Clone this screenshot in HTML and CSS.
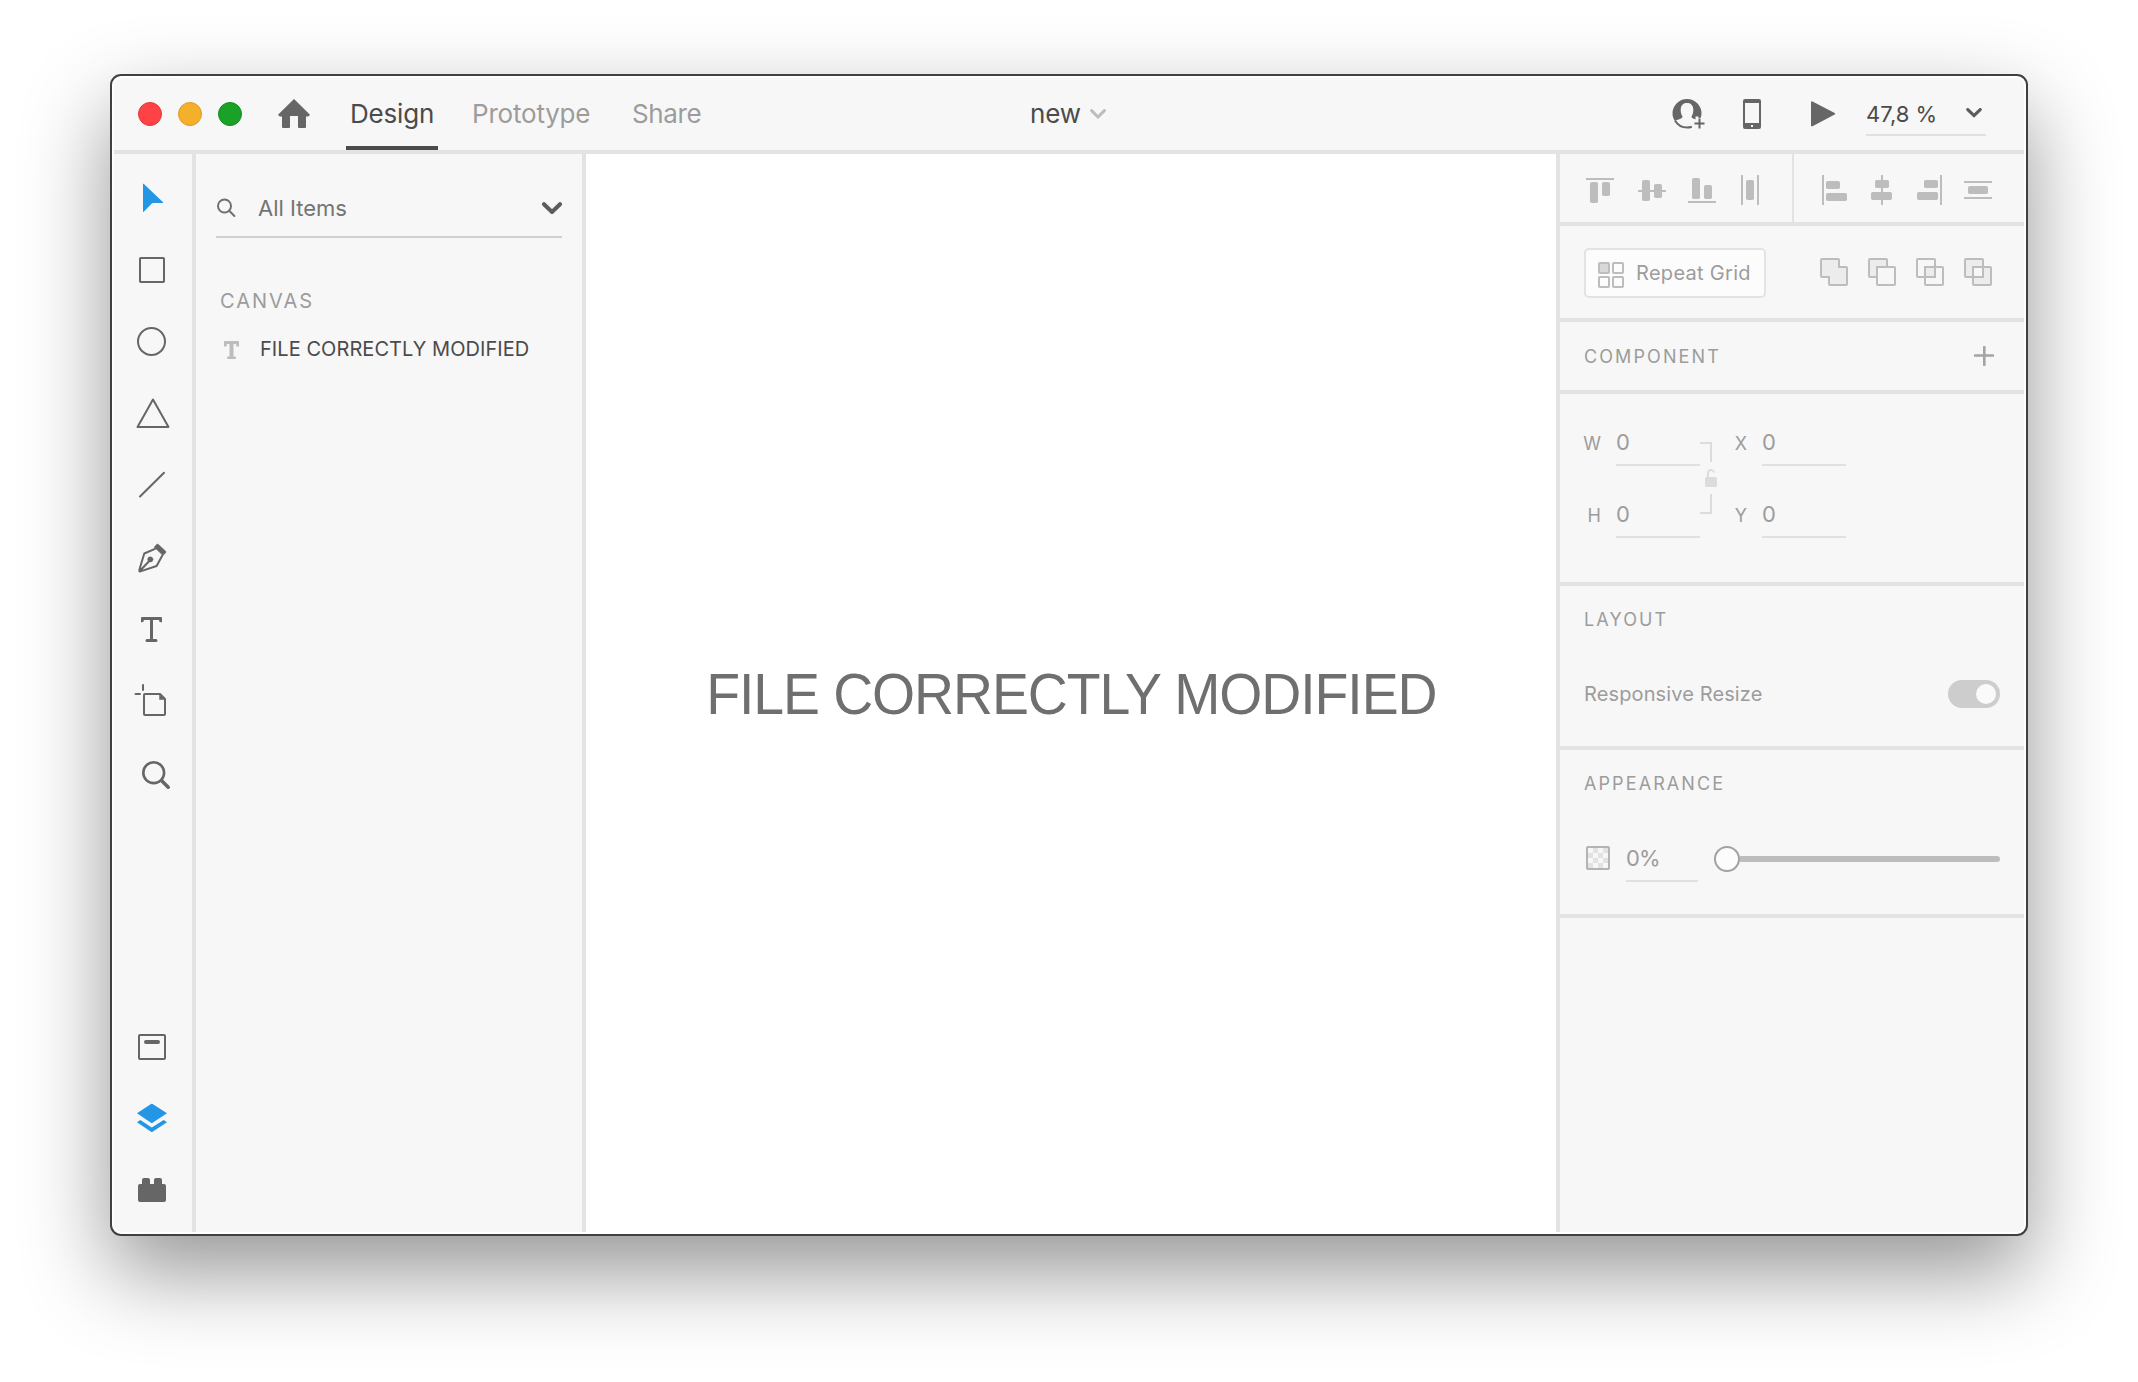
FILE: index.html
```
<!DOCTYPE html>
<html lang="en">
<head>
<meta charset="utf-8">
<title>new</title>
<link rel="stylesheet" href="styles.css">
</head>
<body>
<div class="window">
  <header class="titlebar">
    <div class="titlebar-left">
      <div class="lights"><i class="light red"></i><i class="light amber"></i><i class="light green"></i></div>
      <svg class="home" width="32" height="30" viewBox="0 0 32 30"><path d="M16 0 31.5 15.2a1 1 0 0 1 0 1.3L30 17.6h-2V28a1 1 0 0 1-1 1h-6a1 1 0 0 1-1-1V17h-8v11a1 1 0 0 1-1 1H5a1 1 0 0 1-1-1V17.600H2L.5 16.500a1 1 0 0 1 0-1.300Z"/></svg>
      <nav class="tabs">
        <a class="tab active">Design</a>
        <a class="tab prototype">Prototype</a>
        <a class="tab share">Share</a>
      </nav>
    </div>
    <div class="doc"><span>new</span><svg width="16" height="10" viewBox="0 0 16 10"><path d="M1.600 1.600 8 8l6.400-6.400"/></svg></div>
    <div class="titlebar-right">
      <svg class="user" width="34" height="32" viewBox="0 0 34 32"><path d="M15 1A14.500 14.500 0 0 0 .5 15.500c0 3 .8 5.200 2.500 7.300 2.300-1 5.200-1.500 6.800-2.700.7-.6.800-1.500.3-2.300C8.800 15.500 8.500 13 8.800 10.500 9.200 7 11.500 5 15 5s5.800 2 6.200 5.500c.3 2.500 0 5-1.300 7.300-.5.8-.4 1.700.3 2.300.6.5 2 .9 3.300 1.300v-2.900h3v1.500h2c.7-1.400 1-2.800 1-4.500A14.500 14.500 0 0 0 15 1Z"/><path class="ring" d="M3 22.500C5.500 26.800 10 29.600 15 29.600c1.700 0 3.300-.3 4.800-.9M27.500 20.500v10M22.500 25.500h10"/></svg>
      <svg class="phone" width="18" height="30" viewBox="0 0 18 30"><path fill-rule="evenodd" d="M2 0h14a2 2 0 0 1 2 2v26a2 2 0 0 1-2 2H2a2 2 0 0 1-2-2V2a2 2 0 0 1 2-2Zm0 4v20h14V4Zm6 22v2h2v-2Z"/></svg>
      <svg class="play" width="25" height="26" viewBox="0 0 25 26"><path d="M0 1.200C0 .3.900.2 1.500.5l22.200 11.600c.6.300.6 1 0 1.300L1.500 25.200c-.6.300-1.500.2-1.500-.7Z"/></svg>
      <div class="zoom"><span>47,8 %</span><svg width="16" height="10" viewBox="0 0 16 10"><path d="M1.800 1.600 8 7.600l6.200-6"/></svg></div>
    </div>
  </header>

  <main class="body">
    <aside class="tools">
      <svg class="tool on" viewBox="0 0 78 72"><path d="M29 22.300c0-.6.500-.6.900-.2L48.800 40.100c.5.500.3 1-.3 1H40c-1.300 0-2 .2-2.900 1.100L30 49.600c-.5.500-1 .3-1-.3Z"/></svg>
      <svg class="tool line" viewBox="0 0 78 72"><rect x="26" y="24" width="24" height="24" rx=".8"/></svg>
      <svg class="tool line" viewBox="0 0 78 72"><circle cx="37.500" cy="35.500" r="13.500"/></svg>
      <svg class="tool line" viewBox="0 0 78 72"><path d="M39 21.500 54.500 49h-31Z"/></svg>
      <svg class="tool line" viewBox="0 0 78 72"><path d="M26 46.500 50 22.700"/></svg>
      <svg class="tool line" viewBox="0 0 78 72"><path d="M41 26.800 30.300 31.500C28.600 37 27 42 25.300 48.300c-.1.800.3 1.200 1.100 1.100L42.600 44l5.700-10.500M26 48.700l10-10.500"/><circle class="fill" cx="36.300" cy="37.400" r="2.600"/><path class="fill" d="M42.500 22.500q1-1 2 0l7 6.500q1 1 0 2L49 33.500 40.300 25.300Z"/></svg>
      <svg class="tool" viewBox="0 0 78 72"><path d="M28 23h19a1 1 0 0 1 1 1v4.200h-1a1.800 1.800 0 0 1-1.800-2.200H39v19h3a1.500 1.500 0 0 1 0 3h-9a1.500 1.500 0 0 1 0-3h3V26h-6.200A1.800 1.800 0 0 1 28 28.300h-1V24a1 1 0 0 1 1-1Z"/></svg>
      <svg class="tool line" viewBox="0 0 78 72"><path d="M29 19v5M21.500 28H26M46 28H31a1 1 0 0 0-1 1v19a1 1 0 0 0 1 1h19a1 1 0 0 0 1-1V33Z"/><path class="fill" d="M45.500 28v5.500H51Z"/></svg>
      <svg class="tool line" viewBox="0 0 78 72"><circle cx="39.700" cy="34.700" r="10.400" stroke-width="2.600"/><path stroke-width="3.600" d="m48 43 6.200 6.200"/></svg>
      <svg class="tool line bottom" viewBox="0 0 78 72"><rect x="25" y="25" width="26" height="24" rx="1"/><rect class="bar" x="30" y="30" width="16" height="4" rx="2"/></svg>
      <svg class="tool on" viewBox="0 0 78 72"><path d="M37 22q.8-.5 1.600 0L53 31.300 38.600 40.800q-.8.500-1.600 0L23 31.300ZM26.300 38l11.500 7.500L49.700 38l3.300 2.300-14.400 9.500q-.8.500-1.600 0L23 40.300Z"/></svg>
      <svg class="tool" viewBox="0 0 78 72"><path d="M30 24h4a2 2 0 0 1 2 2v4h4v-4a2 2 0 0 1 2-2h4a2 2 0 0 1 2 2v4h2a2 2 0 0 1 2 2v14a2 2 0 0 1-2 2H26a2 2 0 0 1-2-2V32a2 2 0 0 1 2-2h2v-4a2 2 0 0 1 2-2Z"/></svg>
    </aside>

    <aside class="layers">
      <div class="search">
        <svg width="20" height="20" viewBox="0 0 20 20"><circle cx="8.500" cy="8" r="6.500"/><path d="m13.200 12.800 5.200 5.200"/></svg>
        <span>All Items</span>
        <svg class="drop" width="20" height="13" viewBox="0 0 20 13"><path d="m2 2.200 8 7.800 8-7.800"/></svg>
      </div>
      <h2 class="group-title">CANVAS</h2>
      <div class="layer">
        <svg width="15" height="18" viewBox="0 0 15 18"><path d="M1 0h13q1 0 1 1v4.500h-2.500L12 3H9.500v12.500H11q1 0 1 1.200T11 18H4q-1 0-1-1.300t1-1.200h1.500V3H3L2.500 5.500H0V1q0-1 1-1Z"/></svg>
        <span>FILE CORRECTLY MODIFIED</span>
      </div>
    </aside>

    <section class="canvas"><p class="art-text">FILE CORRECTLY MODIFIED</p></section>

    <aside class="props">
      <section class="align">
        <div class="group first">
          <svg viewBox="0 0 48 68"><path d="M8 24h28v2H8z"/><rect x="12" y="28" width="8" height="21" rx="1.800"/><rect x="24" y="28" width="8" height="14" rx="1.800"/></svg>
          <svg viewBox="0 0 48 68"><path d="M12 36h28v2H12z"/><rect x="16" y="26" width="8" height="21" rx="1.800"/><rect x="28" y="30" width="8" height="14" rx="1.800"/></svg>
          <svg viewBox="0 0 48 68"><path d="M14 47h28v2H14z"/><rect x="18" y="24" width="8" height="21" rx="1.800"/><rect x="30" y="31" width="8" height="14" rx="1.800"/></svg>
          <svg viewBox="0 0 48 68"><path d="M19 21h2v30h-2zM35 21h2v30h-2z"/><rect x="24" y="26" width="8" height="20" rx="1.800"/></svg>
        </div>
        <div class="group">
          <svg viewBox="0 0 48 68"><path d="M10 21h2v30h-2z"/><rect x="14" y="27" width="14" height="8" rx="1.800"/><rect x="14" y="39" width="21" height="8" rx="1.800"/></svg>
          <svg viewBox="0 0 48 68"><path d="M21 21h2v30h-2z"/><rect x="15" y="26" width="14" height="8" rx="1.800"/><rect x="11" y="38" width="21" height="8" rx="1.800"/></svg>
          <svg viewBox="0 0 48 68"><path d="M32 21h2v30h-2z"/><rect x="16" y="26" width="14" height="8" rx="1.800"/><rect x="9" y="38" width="21" height="8" rx="1.800"/></svg>
          <svg viewBox="0 0 48 68"><path d="M8 27h28v2H8zM8 43h28v2H8z"/><rect x="12" y="32" width="20" height="8" rx="1.800"/></svg>
        </div>
      </section>

      <section class="ops">
        <button class="repeat">
          <svg width="26" height="26" viewBox="0 0 26 26"><rect class="tint" x="1" y="1" width="10" height="10" rx=".8"/><rect x="15" y="1" width="10" height="10" rx=".8"/><rect x="1" y="15" width="10" height="10" rx=".8"/><rect x="15" y="15" width="10" height="10" rx=".8"/></svg>
          <span>Repeat Grid</span>
        </button>
        <div class="bools">
          <svg viewBox="0 0 28 28"><path class="soft" d="M2 1h16a1 1 0 0 1 1 1v7h7a1 1 0 0 1 1 1v16a1 1 0 0 1-1 1H10a1 1 0 0 1-1-1v-7H2a1 1 0 0 1-1-1V2a1 1 0 0 1 1-1Z"/></svg>
          <svg viewBox="0 0 28 28"><path class="soft" d="M9 19H2a1 1 0 0 1-1-1V2a1 1 0 0 1 1-1h16a1 1 0 0 1 1 1v7H9Z"/><rect x="9" y="9" width="18" height="18" rx="1"/></svg>
          <svg viewBox="0 0 28 28"><path class="soft" d="M9 9h10v10H9z"/><rect x="1" y="1" width="18" height="18" rx="1"/><rect x="9" y="9" width="18" height="18" rx="1"/></svg>
          <svg viewBox="0 0 28 28"><rect class="soft" x="1" y="1" width="18" height="18" rx="1"/><rect class="soft" x="9" y="9" width="18" height="18" rx="1"/><path class="hole" d="M9 9h10v10H9z"/></svg>
        </div>
      </section>

      <section class="component">
        <h3>COMPONENT</h3>
        <svg width="20" height="20" viewBox="0 0 20 20"><path d="M10.300 1v18M1 9.500h18"/></svg>
      </section>

      <section class="size">
        <div class="pairs">
          <label>W</label><div class="field">0</div>
          <label>H</label><div class="field">0</div>
        </div>
        <svg class="link" width="18" height="72" viewBox="0 0 18 72"><path class="wire" d="M0 1h11v19M11 52v19H0"/><rect x="5" y="35" width="12" height="10" rx="1.500"/><path class="wire" d="M8 36v-4.500a3 3 0 0 1 6-1"/></svg>
        <div class="pairs second">
          <label>X</label><div class="field">0</div>
          <label>Y</label><div class="field">0</div>
        </div>
      </section>

      <section class="layout">
        <h3>LAYOUT</h3>
        <div class="row"><span>Responsive Resize</span><span class="toggle"></span></div>
      </section>

      <section class="appearance">
        <h3>APPEARANCE</h3>
        <div class="row">
          <svg width="24" height="24" viewBox="0 0 24 24"><path class="check" d="M7 2h5v5H7zM17 2h5v5h-5zM2 7h5v5H2zM12 7h5v5h-5zM7 12h5v5H7zM17 12h5v5h-5zM2 17h5v5H2zM12 17h5v5h-5z"/><rect x="1" y="1" width="22" height="22" rx="1"/></svg>
          <div class="field percent">0%</div>
          <div class="slider"><span class="knob"></span><span class="track"></span></div>
        </div>
      </section>
    </aside>
  </main>
</div>
</body>
</html>
```
FILE: styles.css
```
* { box-sizing: border-box; }
html, body { margin: 0; background: #fff; }
body {
  width: 2138px; height: 1382px; padding: 74px 0 0 110px; overflow: hidden;
  font-family: Inter, "Liberation Sans", sans-serif; color: #4b4b4b;
}
svg { display: block; flex: none; }
h2, h3, p { margin: 0; font-weight: 400; }
span, h2, h3, p, label { white-space: nowrap; }

.window {
  width: 1918px; height: 1162px; padding: 2px;
  display: flex; flex-direction: column;
  border: 2px solid #404042; border-radius: 11px; background: #fff;
  box-shadow: 0 36px 86px rgba(0, 0, 0, .42);
}

/* Title bar */
.titlebar {
  flex: none; height: 76px; padding: 0 38px 0 24px;
  display: grid; grid-template-columns: 1fr auto 1fr;
  background: #f7f7f7; border-bottom: 4px solid #e3e3e3; border-radius: 8px 8px 0 0;
}
.titlebar-left, .titlebar-right, .doc { display: flex; align-items: center; height: 72px; }
.titlebar-right { justify-content: flex-end; }
.lights { display: flex; gap: 16px; }
.light { width: 24px; height: 24px; border-radius: 50%; border: 1px solid; }
.red { background: #ff4245; border-color: #e0383c; }
.amber { background: #f5b02b; border-color: #dc9c22; }
.green { background: #1aa127; border-color: #148a1f; }
.home { margin-left: 36px; fill: #666; }
.tabs { display: flex; margin-left: 36px; height: 72px; }
.tab { height: 72px; line-height: 71px; font-size: 26px; letter-spacing: -.2px; color: #9c9c9c; }
.tab.active { width: 92px; padding-left: 4px; color: #4b4b4b; border-bottom: 4px solid #4b4b4b; }
.prototype { margin-left: 34px; width: 160px; }
.share { width: 74px; letter-spacing: -.4px; }
.doc { font-size: 26px; line-height: 71px; padding: 0 0 1px 12px; letter-spacing: -.2px; }
.doc span { width: 60px; }
.doc svg { fill: none; stroke: #bdbdbd; stroke-width: 3; stroke-linecap: round; }
.user, .phone, .play { fill: #666; }
.ring { fill: none; stroke: #666; stroke-width: 2; }
.user { margin-right: 37px; }
.phone { margin-right: 50px; }
.play { margin-right: 30px; }
.zoom {
  width: 120px; height: 44px; display: flex; justify-content: space-between;
  align-items: center; padding: 2px 4px 0 0; border-bottom: 2px solid #e0e0e0; font-size: 22px;
}
.zoom svg { fill: none; stroke: #5c5c5c; stroke-width: 3.2; stroke-linecap: round; margin-bottom: 3px; }

.body { flex: 1; display: flex; min-height: 0; }

/* Tool column */
.tools {
  flex: none; width: 82px; padding: 8px 0 6px; display: flex; flex-direction: column;
  background: #f7f7f7; border-right: 4px solid #e3e3e3; border-radius: 0 0 0 8px;
}
.tool { width: 78px; height: 72px; fill: #666; }
.on { fill: #2396e6; }
.line { fill: none; stroke: #666; stroke-width: 2; stroke-linecap: round; stroke-linejoin: round; }
.line .fill { fill: #666; stroke-width: .5; }
.line .bar { fill: #666; stroke: none; }
.bottom { margin-top: auto; }

/* Layer list */
.layers { flex: none; width: 390px; padding: 28px 20px 0; background: #f7f7f7; border-right: 4px solid #e3e3e3; }
.search {
  height: 56px; display: flex; align-items: center; padding-bottom: 2px;
  border-bottom: 2px solid #d0d0d0; font-size: 22px; color: #747474;
}
.search svg { fill: none; stroke: #707070; stroke-width: 2; stroke-linecap: round; }
.search span { margin-left: 22px; }
.search .drop { margin-left: auto; stroke: #5c5c5c; stroke-width: 4; stroke-linejoin: round; }
.group-title { margin: 50px 0 0 4px; font-size: 20px; line-height: 26px; color: #9c9c9c; letter-spacing: 2px; }
.layer { display: flex; align-items: center; margin: 20px 0 0 8px; height: 30px; font-size: 20px; letter-spacing: .06px; }
.layer svg { fill: #bdbdbd; margin-top: 2px; }
.layer span { margin-left: 21px; }

/* Artwork */
.canvas { flex: 1; display: flex; justify-content: center; padding-top: 508px; background: #fff; }
.art-text {
  font: 58px/64px "Liberation Sans", sans-serif; letter-spacing: -1.13px; color: #6f6f6f;
  transform: scaleX(.955);
}

/* Property panel */
.props {
  flex: none; width: 468px; background: #f7f7f7; border-left: 4px solid #e3e3e3;
  border-radius: 0 0 8px 0; color: #9c9c9c;
}
.props section { border-bottom: 4px solid #e3e3e3; }
.align { display: flex; height: 72px; }
.group { display: flex; padding-left: 18px; }
.group.first { width: 234px; border-right: 2px solid #e3e3e3; }
.group svg { width: 48px; height: 68px; fill: #bdbdbd; }
.ops { display: flex; height: 96px; padding: 22px 32px 0 24px; justify-content: space-between; }
.repeat {
  width: 182px; height: 50px; padding: 0 0 0 12px; display: flex; align-items: center;
  border: 2px solid #e3e3e3; border-radius: 5px; background: #fcfcfc; color: #9c9c9c;
  font-family: inherit; font-size: 20px; letter-spacing: .3px;
}
.repeat svg { fill: none; stroke: #bdbdbd; stroke-width: 2; margin-top: 4px; }
.repeat .tint { fill: #d8d8d8; }
.repeat span { margin-left: 12px; }
.bools { display: flex; gap: 20px; padding-top: 10px; }
.bools svg { width: 28px; height: 28px; fill: none; stroke: #bdbdbd; stroke-width: 2; }
.bools .soft { fill: #ececec; }
.bools .hole { fill: #f7f7f7; }
h3 { font-size: 18px; line-height: 24px; letter-spacing: 2.1px; }
.component { display: flex; height: 72px; padding: 23px 30px 0 24px; justify-content: space-between; }
.component svg { fill: none; stroke: #a4a4a4; stroke-width: 2.600; stroke-linecap: round; margin-top: 1px; }
.size { display: flex; height: 192px; padding: 28px 0 0 16px; }
.pairs { display: grid; grid-template-columns: 25px 84px; column-gap: 15px; grid-auto-rows: 44px; row-gap: 28px; }
.pairs label { font-size: 18px; line-height: 44px; text-align: right; }
.field { height: 44px; font-size: 22px; line-height: 41px; border-bottom: 2px solid #e0e0e0; }
.link { margin-top: 20px; fill: #dcdcdc; }
.wire { fill: none; stroke: #dcdcdc; stroke-width: 2; }
.pairs.second { margin-left: 4px; }
.layout { height: 164px; padding: 22px 24px 0; }
.row { display: flex; align-items: center; }
.layout .row { justify-content: space-between; margin-top: 48px; height: 28px; font-size: 20px; letter-spacing: .12px; }
.toggle { width: 52px; height: 28px; padding: 4px; border-radius: 14px; background: #cdcdcd; display: flex; justify-content: flex-end; }
.toggle::after { content: ""; width: 20px; height: 20px; border-radius: 50%; background: #fafafa; }
.appearance { height: 168px; padding: 22px 24px 0 26px; }
.appearance h3 { margin-left: -2px; }
.appearance .row { margin-top: 42px; height: 44px; }
.appearance svg { fill: none; stroke: #b4b4b4; stroke-width: 2; margin-top: -4px; }
.appearance .check { fill: #e2e2e2; stroke: none; }
.percent { width: 72px; margin-left: 16px; letter-spacing: -.9px; }
.slider { flex: 1; margin-left: 16px; display: flex; align-items: center; margin-top: -2px; }
.knob { width: 26px; height: 26px; border: 2px solid #a2a2a2; border-radius: 50%; background: #fcfcfc; }
.track { flex: 1; height: 6px; border-radius: 0 3px 3px 0; background: #bdbdbd; }
```
